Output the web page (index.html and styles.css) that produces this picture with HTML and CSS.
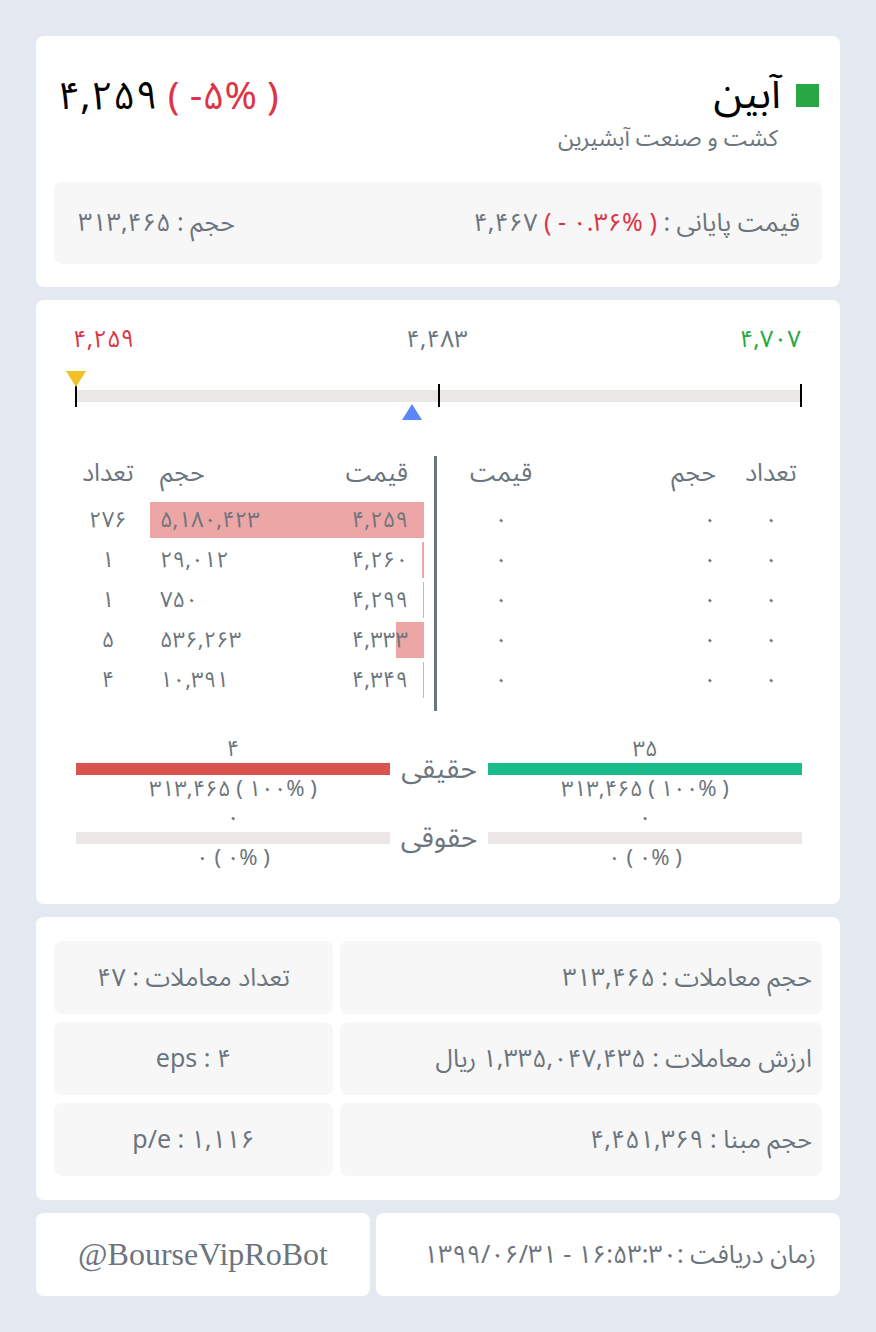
FILE: index.html
```html
<!DOCTYPE html>
<html lang="fa" dir="rtl">
<head>
  <meta charset="UTF-8">
  <meta name="viewport" content="width=device-width, initial-scale=1.0">
  <title>آبین</title>
  <link rel="stylesheet" href="styles.css">
</head>
<body>
  <!-- Symbol header -->
  <div class="card head-card">
    <div class="head-row">
      <div class="head-title">
        <div class="symbol"><span class="sq"></span><span>آبین</span></div>
        <div class="company">کشت و صنعت آبشیرین</div>
      </div>
      <div class="last-price" dir="ltr">۴,۲۵۹ <span class="red">( -۵% )</span></div>
    </div>
    <div class="info-box">
      <span>قیمت پایانی : <span dir="ltr">۴,۴۶۷ <span class="red">( - ۰.۳۶% )</span></span></span>
      <span>حجم : ۳۱۳,۴۶۵</span>
    </div>
  </div>

  <!-- Range + order book -->
  <div class="card book-card">
    <div class="range-labels" dir="ltr">
      <span class="red">۴,۲۵۹</span>
      <span>۴,۴۸۳</span>
      <span class="green">۴,۷۰۷</span>
    </div>
    <div class="track" dir="ltr">
      <i class="tick" style="left: 0%"></i>
      <i class="tick" style="left: 50%"></i>
      <i class="tick" style="left: 100%"></i>
      <i class="mark-last" style="left: 0%"></i>
      <i class="mark-close" style="left: 46.4%"></i>
    </div>

    <div class="book">
      <!-- buy side -->
      <div class="side buy" dir="ltr">
        <div class="b-row b-head">
          <div class="b-area"><span class="c-price">قیمت</span><span class="c-vol">حجم</span></div>
          <span class="c-count">تعداد</span>
        </div>
        <div class="b-row"><div class="b-area"><span class="c-price">۰</span><span class="c-vol">۰</span></div><span class="c-count">۰</span></div>
        <div class="b-row"><div class="b-area"><span class="c-price">۰</span><span class="c-vol">۰</span></div><span class="c-count">۰</span></div>
        <div class="b-row"><div class="b-area"><span class="c-price">۰</span><span class="c-vol">۰</span></div><span class="c-count">۰</span></div>
        <div class="b-row"><div class="b-area"><span class="c-price">۰</span><span class="c-vol">۰</span></div><span class="c-count">۰</span></div>
        <div class="b-row"><div class="b-area"><span class="c-price">۰</span><span class="c-vol">۰</span></div><span class="c-count">۰</span></div>
      </div>
      <div class="divider"></div>
      <!-- sell side -->
      <div class="side sell">
        <div class="b-row b-head">
          <div class="b-area"><span class="c-price">قیمت</span><span class="c-vol">حجم</span></div>
          <span class="c-count">تعداد</span>
        </div>
        <div class="b-row"><div class="b-area"><i class="fill" style="width: 100%"></i><span class="c-price">۴,۲۵۹</span><span class="c-vol">۵,۱۸۰,۴۲۳</span></div><span class="c-count">۲۷۶</span></div>
        <div class="b-row"><div class="b-area"><i class="fill" style="width: 0.56%"></i><span class="c-price">۴,۲۶۰</span><span class="c-vol">۲۹,۰۱۲</span></div><span class="c-count">۱</span></div>
        <div class="b-row"><div class="b-area"><i class="fill" style="width: 0.01%"></i><span class="c-price">۴,۲۹۹</span><span class="c-vol">۷۵۰</span></div><span class="c-count">۱</span></div>
        <div class="b-row"><div class="b-area"><i class="fill" style="width: 10.35%"></i><span class="c-price">۴,۳۳۳</span><span class="c-vol">۵۳۶,۲۶۳</span></div><span class="c-count">۵</span></div>
        <div class="b-row"><div class="b-area"><i class="fill" style="width: 0.2%"></i><span class="c-price">۴,۳۴۹</span><span class="c-vol">۱۰,۳۹۱</span></div><span class="c-count">۴</span></div>
      </div>
    </div>

    <!-- individual / legal -->
    <div class="split">
      <div class="split-row">
        <div class="split-side">
          <div class="num">۳۵</div>
          <div class="bar"><i class="bar-fill buy-fill" style="width: 100%"></i></div>
          <div class="num" dir="ltr">۳۱۳,۴۶۵ ( ۱۰۰% )</div>
        </div>
        <div class="split-label">حقیقی</div>
        <div class="split-side">
          <div class="num">۴</div>
          <div class="bar"><i class="bar-fill sell-fill" style="width: 100%"></i></div>
          <div class="num" dir="ltr">۳۱۳,۴۶۵ ( ۱۰۰% )</div>
        </div>
      </div>
      <div class="split-row">
        <div class="split-side">
          <div class="num">۰</div>
          <div class="bar"></div>
          <div class="num" dir="ltr">۰ ( ۰% )</div>
        </div>
        <div class="split-label">حقوقی</div>
        <div class="split-side">
          <div class="num">۰</div>
          <div class="bar"></div>
          <div class="num" dir="ltr">۰ ( ۰% )</div>
        </div>
      </div>
    </div>
  </div>

  <!-- Stats -->
  <div class="card stats-card">
    <div class="stats">
      <div class="stat">حجم معاملات : ۳۱۳,۴۶۵</div>
      <div class="stat center">تعداد معاملات : ۴۷</div>
      <div class="stat">ارزش معاملات : ۱,۳۳۵,۰۴۷,۴۳۵ ریال</div>
      <div class="stat center"><span dir="ltr">eps : ۴</span></div>
      <div class="stat">حجم مبنا : ۴,۴۵۱,۳۶۹</div>
      <div class="stat center"><span dir="ltr">p/e : ۱,۱۱۶</span></div>
    </div>
  </div>

  <!-- Footer -->
  <div class="footer">
    <div class="foot-box time">زمان دریافت : <span dir="ltr">۱۳۹۹/۰۶/۳۱ - ۱۶:۵۳:۳۰</span></div>
    <div class="foot-box bot" dir="ltr">@BourseVipRoBot</div>
  </div>
</body>
</html>
```

FILE: styles.css
```css
body {
  font-family: "Vazir", "Noto Sans Arabic", "DejaVu Sans", sans-serif;
  margin: 0;
  padding: 36px 36px 37px;
  background-color: #e4e8f1;
  color: #6c757d;
}
.card {
  background: #fff;
  border-radius: 8px;
  margin-bottom: 13px;
}
.red { color: #dc3545; }
.green { color: #28a745; }

/* header card */
.head-card {
  padding: 36px 18px 23px;
}
.head-row {
  display: flex;
  justify-content: space-between;
  align-items: flex-start;
  padding: 0 3px 0 4px;
}
.symbol {
  display: flex;
  align-items: center;
  gap: 15px;
  font-size: 42px;
  line-height: 46px;
  color: #000;
}
.sq {
  width: 23px;
  height: 23px;
  background: #28a745;
}
.company {
  margin-top: 6px;
  padding-right: 41px;
  font-size: 23px;
  line-height: 30px;
}
.last-price {
  font-size: 39px;
  line-height: 46px;
  color: #000;
  margin-top: 2px;
}
.info-box {
  margin-top: 28px;
  height: 82px;
  padding: 0 22px 0 24px;
  background: #f7f7f8;
  border-radius: 8px;
  display: flex;
  justify-content: space-between;
  align-items: center;
  font-size: 25px;
}

/* range */
.book-card {
  padding: 25px 38px 30px 40px;
}
.range-labels {
  display: flex;
  justify-content: space-between;
  font-size: 24px;
  line-height: 30px;
  margin: 0 1px 0 -3px;
}
.track {
  position: relative;
  margin: 35px 1px 0 0;
  height: 12px;
  background: #ebe7e6;
}
.tick {
  position: absolute;
  top: -6px;
  width: 2px;
  height: 23px;
  margin-left: -1px;
  background: #000;
}
.mark-last {
  position: absolute;
  top: -19px;
  margin-left: -10px;
  border-left: 10px solid transparent;
  border-right: 10px solid transparent;
  border-top: 16px solid #f2c224;
}
.mark-close {
  position: absolute;
  top: 14px;
  margin-left: -10px;
  border-left: 10px solid transparent;
  border-right: 10px solid transparent;
  border-bottom: 16px solid #5b86f7;
}

/* order book */
.book {
  display: flex;
  margin-top: 54px;
}
.divider {
  width: 3px;
  background: #6c757d;
}
.side {
  padding-bottom: 9px;
}
.side.sell {
  width: 348px;
  padding-right: 10px;
}
.side.buy {
  flex: 1;
  padding-left: 10px;
}
.b-row {
  display: flex;
  gap: 10px;
  height: 36px;
  margin-bottom: 4px;
  align-items: center;
  font-size: 22px;
}
.b-head {
  height: 34px;
  margin-bottom: 12px;
  font-size: 25px;
}
.b-area {
  position: relative;
  flex: 1;
  height: 100%;
  display: flex;
  justify-content: space-between;
  align-items: center;
}
.b-area span {
  position: relative;
}
.fill {
  position: absolute;
  top: 0;
  right: 0;
  height: 100%;
  min-width: 1px;
  background: #eca6a5;
}
.c-count {
  width: 64px;
  text-align: center;
}
.sell .b-area {
  padding: 0 16px 0 10px;
}
.buy .b-area {
  padding: 0 14px 0 23px;
}
.buy .c-price {
  width: 62px;
  text-align: center;
}
.buy .c-count {
  width: 62px;
}

/* individual / legal split */
.split {
  margin-top: 25px;
}
.split-row {
  display: flex;
  align-items: center;
  margin-bottom: 2px;
}
.split-side {
  flex: 1;
  text-align: center;
}
.num {
  font-size: 22px;
  line-height: 27px;
}
.split-side .num:last-child {
  line-height: 28px;
}
.bar {
  position: relative;
  height: 12px;
  background: #ebe7e6;
}
.bar-fill {
  position: absolute;
  top: 0;
  right: 0;
  height: 100%;
}
.buy-fill { background: #1bbc8b; }
.sell-fill { background: #d9534f; }
.split-label {
  width: 98px;
  text-align: center;
  font-size: 28px;
}

/* stats */
.stats-card {
  padding: 24px 18px;
}
.stats {
  display: grid;
  grid-template-columns: 1fr 279px;
  gap: 8px 7px;
}
.stat {
  height: 73px;
  background: #f7f7f8;
  border-radius: 8px;
  display: flex;
  align-items: center;
  padding: 0 10px;
  font-size: 25px;
}
.stat.center {
  justify-content: center;
}

/* footer */
.footer {
  display: flex;
  gap: 6px;
}
.foot-box {
  height: 83px;
  background: #fff;
  border-radius: 8px;
  display: flex;
  align-items: center;
  font-size: 25px;
}
.time {
  flex: 1;
  padding-right: 24px;
}
.bot {
  width: 334px;
  justify-content: center;
  font-family: "Liberation Serif", serif;
  font-size: 32px;
}
```
